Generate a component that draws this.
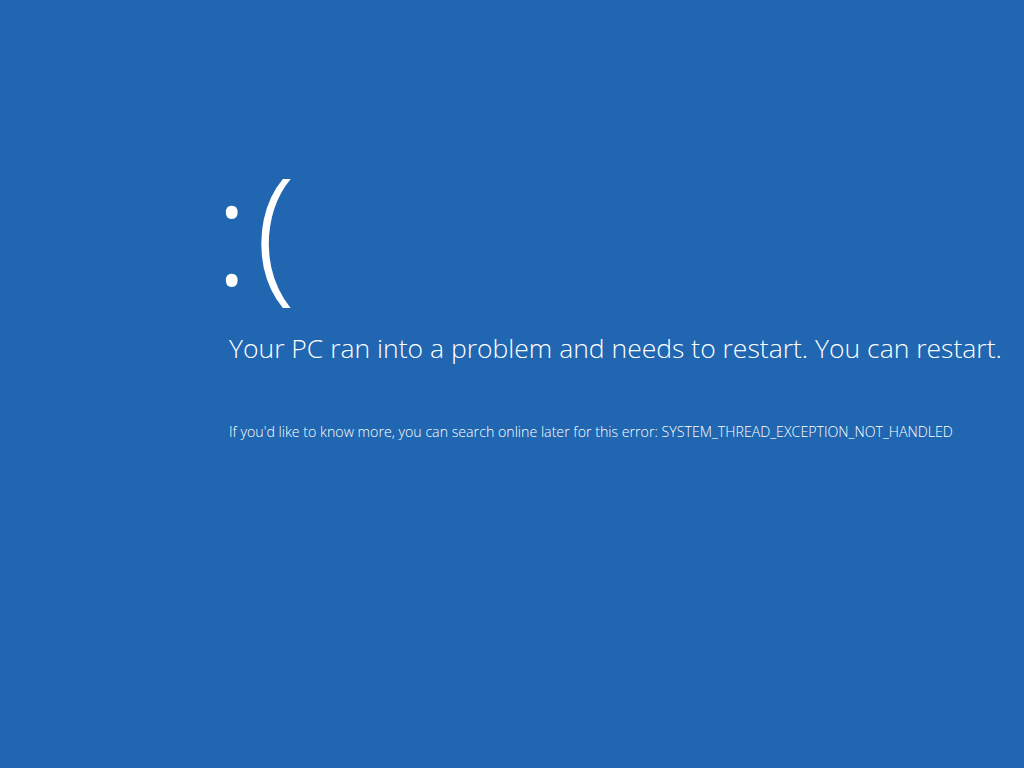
const App = () => {
  return (
    <div className="h-screen w-full bg-[#2066b0] text-white overflow-hidden" style={{ fontFamily: '"Open Sans", sans-serif' }}>
      <div className="pl-[214px] pt-[154px]">
        <div className="text-[148px] leading-[148px] font-light tracking-[6px]">:(</div>
      </div>
      <div className="pl-[229px] mt-[28px]">
        <div className="text-[26.5px] leading-[36px] font-light">
          Your PC ran into a problem and needs to restart. You can restart.
        </div>
        <div className="mt-[56px] text-[14.2px] leading-[20px] font-light">
          If you'd like to know more, you can search online later for this error: SYSTEM_THREAD_EXCEPTION_NOT_HANDLED
        </div>
      </div>
    </div>
  );
};

export default App;
